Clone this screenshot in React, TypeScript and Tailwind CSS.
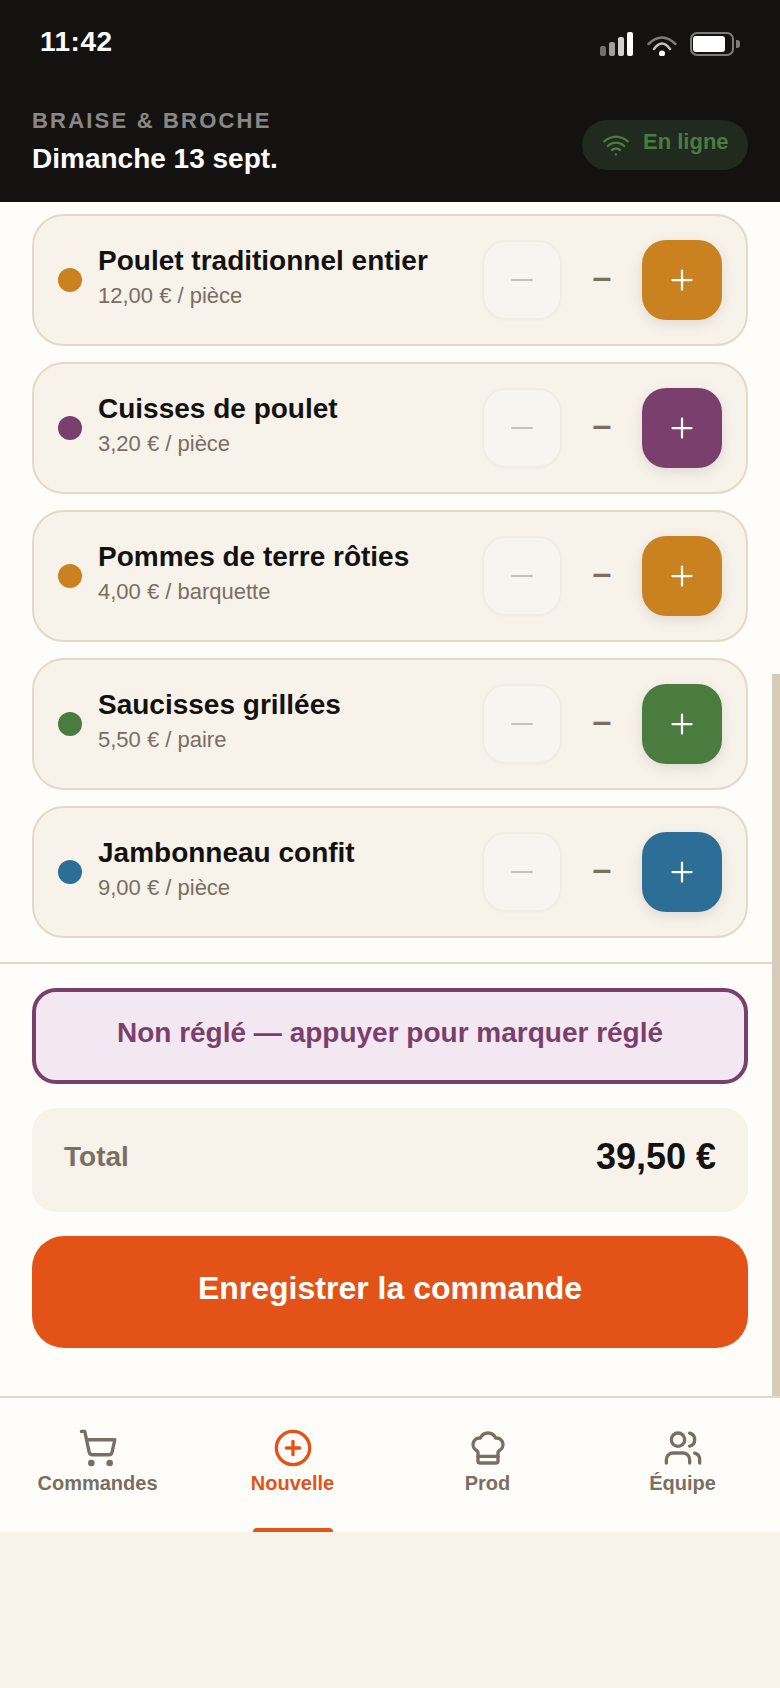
import { ChefHat, CirclePlus, ShoppingCart, Users, Wifi } from "lucide-react";

const products = [
  { name: "Poulet traditionnel entier", price: "12,00 € / pièce", dot: "bg-[#c9821f]" },
  { name: "Cuisses de poulet", price: "3,20 € / pièce", dot: "bg-[#7b3f6e]" },
  { name: "Pommes de terre rôties", price: "4,00 € / barquette", dot: "bg-[#c9821f]" },
  { name: "Saucisses grillées", price: "5,50 € / paire", dot: "bg-[#4a7c3f]" },
  { name: "Jambonneau confit", price: "9,00 € / pièce", dot: "bg-[#2d6e96]" },
];

const tabs = [
  { label: "Commandes", icon: ShoppingCart },
  { label: "Nouvelle", icon: CirclePlus, active: true },
  { label: "Prod", icon: ChefHat },
  { label: "Équipe", icon: Users },
];

function StatusBar() {
  return (
    <div className="flex h-[100px] items-start justify-between pr-[40px] pl-[40px] text-white">
      <span className="mt-[24px] text-[28px] leading-[36px] font-bold tracking-[0.5px]">11:42</span>
      <div className="mt-[32px] flex items-start">
        <div className="flex h-[24px] items-end gap-[3px]">
          <div className="h-[10px] w-[6px] rounded-[2px] bg-white/40" />
          <div className="h-[14px] w-[6px] rounded-[2px] bg-white/60" />
          <div className="h-[19px] w-[6px] rounded-[2px] bg-white/80" />
          <div className="h-[24px] w-[6px] rounded-[2px] bg-white" />
        </div>
        <svg className="mt-[4px] ml-[14px]" width="30" height="20" viewBox="0 0 30 20" fill="none" strokeLinecap="round" strokeWidth="2.5">
          <path d="M1.5 8 Q15 -5 28.5 8" stroke="#ffffff" strokeOpacity="0.45" />
          <path d="M7 13 Q15 2 23 13" stroke="#ffffff" strokeOpacity="0.75" />
          <circle cx="15" cy="17.5" r="3" fill="#ffffff" />
        </svg>
        <div className="ml-[13px] flex items-center">
          <div className="flex h-[24px] w-[44px] items-center rounded-[7px] border-2 border-white/45 pl-[1px]">
            <div className="h-[16px] w-[32px] rounded-[3px] bg-white" />
          </div>
          <div className="ml-[2px] h-[8px] w-[4px] rounded-r-[3px] bg-white/45" />
        </div>
      </div>
    </div>
  );
}

function ProductRow({ name, price, dot }: { name: string; price: string; dot: string }) {
  return (
    <div className="flex h-[132px] items-center rounded-[32px] border-2 border-[#e3d9ca] bg-[#f7f2ea] pr-[24px] pl-[24px]">
      <div className={`h-[24px] w-[24px] shrink-0 rounded-full ${dot}`} />
      <div className="ml-[16px] min-w-0 flex-1 pb-[6px]">
        <div className="text-[28px] leading-[36px] font-bold text-[#141210]">{name}</div>
        <div className="mt-[2px] text-[22px] leading-[30px] text-[#7a6e63]">{price}</div>
      </div>
      <div className="flex h-[80px] w-[80px] items-center justify-center rounded-[24px] border-2 border-[#f2ede4] bg-[#f8f5f0] shadow-[0_1px_3px_rgba(0,0,0,0.02)]">
        <div className="h-[2.5px] w-[22px] rounded-[1px] bg-[#c5c0ba]" />
      </div>
      <div className="flex h-[80px] w-[80px] items-center justify-center pb-[8px] text-[34px] font-bold text-[#7a6e63]">–</div>
      <div className={`flex h-[80px] w-[80px] items-center justify-center rounded-[24px] shadow-[0_4px_14px_rgba(0,0,0,0.1)] ${dot}`}>
        <svg width="22" height="22" viewBox="0 0 22 22" stroke="#ffffff" strokeWidth="2.25" strokeLinecap="round">
          <path d="M1.5 11H20.5M11 1.5V20.5" />
        </svg>
      </div>
    </div>
  );
}

export default function App() {
  return (
    <div className="flex min-h-[1688px] flex-col bg-[#f7f2ea] font-['Liberation_Sans',Arial,sans-serif]">
      <div className="bg-[#141210]">
        <StatusBar />
        <div className="flex h-[102px] items-start justify-between px-[32px]">
          <div>
            <div className="mt-[8px] text-[22px] leading-[26px] font-bold tracking-[2.2px] text-white/50">BRAISE &amp; BROCHE</div>
            <div className="mt-[7px] text-[28px] leading-[36px] font-bold text-white">Dimanche 13 sept.</div>
          </div>
          <div className="mt-[20px] flex h-[50px] w-[166px] items-center gap-[13px] rounded-full bg-[#212a1f] pl-[20px]">
            <Wifi size={28} className="text-[#4a7c3f]" />
            <span className="mb-[6px] text-[22px] leading-[26px] font-bold text-[#4a7c3f]">En ligne</span>
          </div>
        </div>
      </div>

      <div className="relative bg-[#fffdf9]">
        <div className="flex flex-col gap-[16px] px-[32px] pt-[12px] pb-[24px]">
          {products.map((product) => (
            <ProductRow key={product.name} {...product} />
          ))}
        </div>

        <div className="border-t-2 border-[#e3d9ca] px-[32px] pt-[24px] pb-[48px]">
          <div className="flex h-[96px] items-center justify-center rounded-[24px] border-4 border-[#7b3f6e] bg-[#f3e8f2] pb-[6px] text-[28px] font-bold text-[#7b3f6e]">
            Non réglé — appuyer pour marquer réglé
          </div>
          <div className="mt-[24px] flex h-[104px] items-center justify-between rounded-[24px] bg-[#f7f2ea] px-[32px] pb-[6px]">
            <span className="text-[28px] font-bold text-[#7a6e63]">Total</span>
            <span className="text-[36px] font-bold text-[#141210]">39,50 €</span>
          </div>
          <div className="mt-[24px] flex h-[112px] items-center justify-center rounded-[32px] bg-[#e35318] pb-[8px] text-[32px] font-bold text-white">
            Enregistrer la commande
          </div>
        </div>

        <div className="absolute right-0 bottom-0 h-[722px] w-[8px] bg-[#d6cbb9]" />
      </div>

      <div className="grid h-[136px] grid-cols-4 border-t-2 border-[#e3d9ca] bg-[#fffdf9]">
        {tabs.map(({ label, icon: Icon, active }) => (
          <div key={label} className={`relative flex flex-col items-center pt-[30px] ${active ? "text-[#e35318]" : "text-[#7a6e63]"}`}>
            <Icon size={40} />
            <span className="mt-[2px] text-[20px] leading-[26px] font-bold">{label}</span>
            {active && <div className="absolute bottom-0 h-[4px] w-[80px] rounded-t-[4px] bg-[#e35318]" />}
          </div>
        ))}
      </div>
    </div>
  );
}
